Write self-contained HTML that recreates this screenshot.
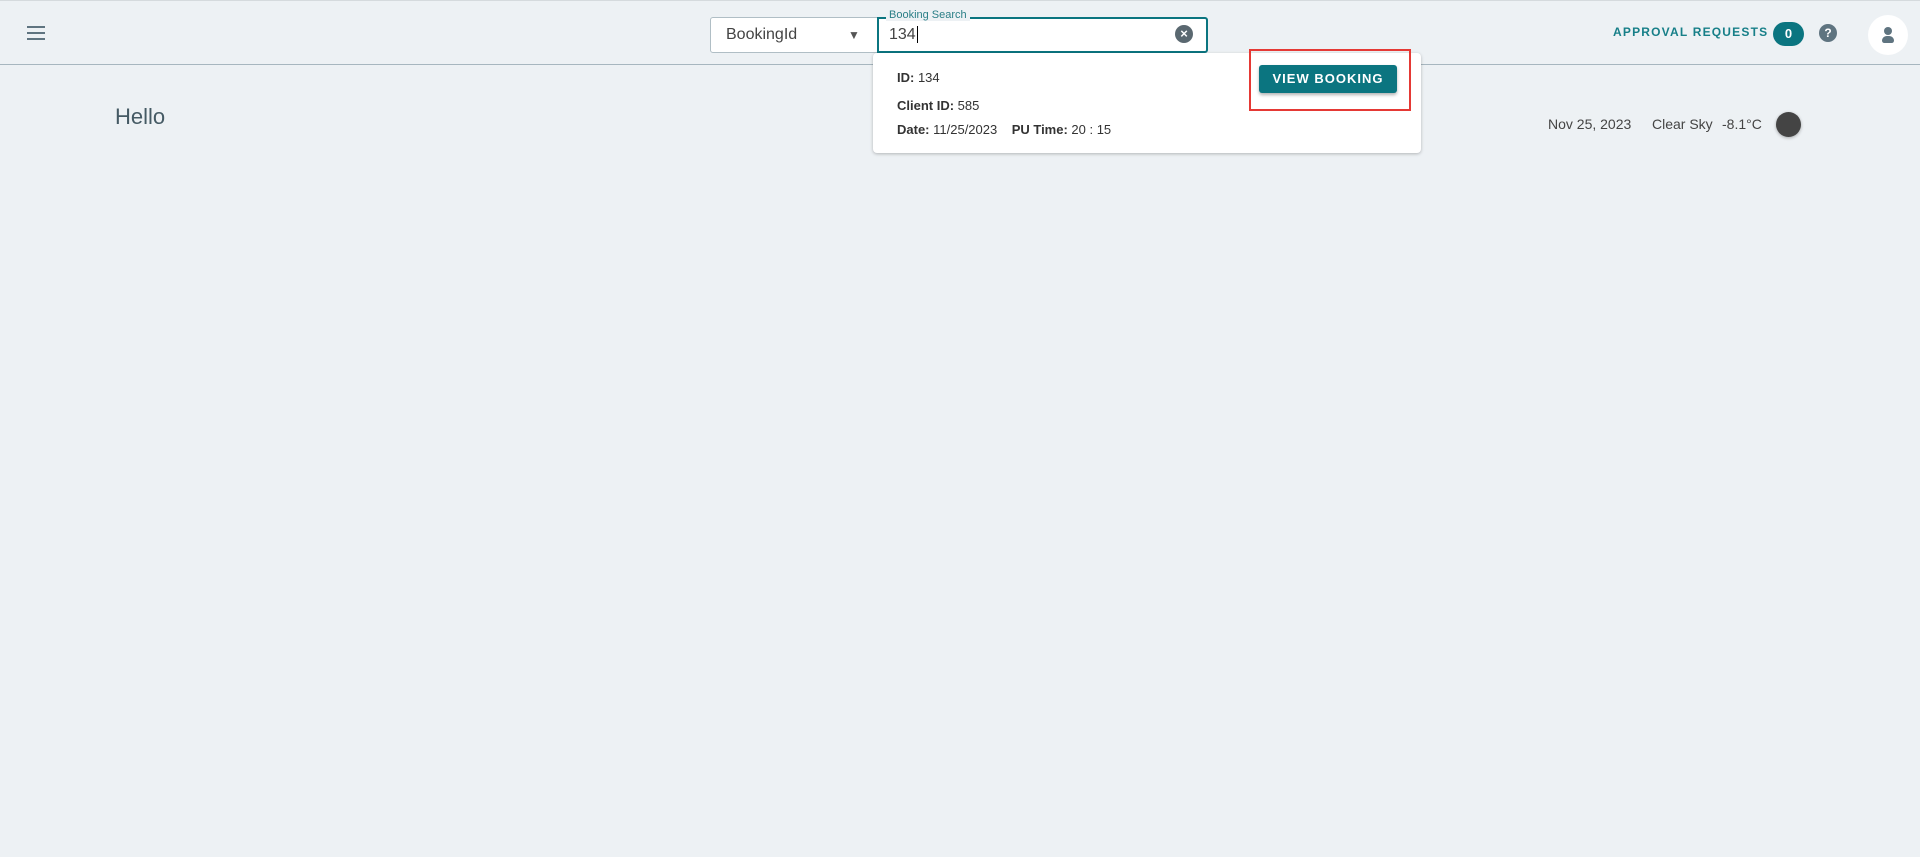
<!DOCTYPE html>
<html><head><style>
body{margin:0;width:1920px;height:857px;background:#edf1f4;font-family:"Liberation Sans",sans-serif;position:relative;overflow:hidden;color:#37474f}
.a{position:absolute;white-space:nowrap}
</style></head><body>
<div class="a" style="left:0;top:0;width:1920px;height:1px;background:#d5dadd"></div>
<div class="a" style="left:0;top:64px;width:1920px;height:1px;background:#a7b6bf"></div>
<div class="a" style="left:27px;top:26px;width:18px;height:2px;background:#5f7480;box-shadow:0 6px 0 #5f7480,0 12px 0 #5f7480"></div>
<div class="a" style="left:115px;top:104px;font-size:22px;font-weight:300;color:#455a64">Hello</div>

<div class="a" style="left:710px;top:17px;width:168px;height:36px;border:1px solid #b0bec5;border-radius:3px 0 0 3px;background:#fff;box-sizing:border-box"></div>
<div class="a" style="left:726px;top:26px;font-size:16px;color:#444">BookingId</div>
<div class="a" style="left:848px;top:28px;font-size:12px;color:#555">▼</div>
<div class="a" style="left:877px;top:17px;width:331px;height:36px;border:2px solid #0b7580;border-radius:0 3px 3px 0;box-sizing:border-box;background:#fff"></div>
<div class="a" style="left:886px;top:9px;font-size:11px;color:#2b7f87;background:#edf1f4;padding:0 3px">Booking Search</div>
<div class="a" style="left:889px;top:26px;font-size:16px;color:#444">134<span style="border-left:1px solid #000;margin-left:1px"></span></div>
<div class="a" style="left:1175px;top:25px;width:18px;height:18px;border-radius:50%;background:#5a6870;color:#fff;font-size:13px;line-height:18px;text-align:center;font-weight:bold">×</div>

<div class="a" style="left:873px;top:53px;width:548px;height:100px;background:#fff;border-radius:4px;box-shadow:0 1px 3px rgba(0,0,0,.25)"></div>
<div class="a" style="left:897px;top:70px;font-size:13px;color:#333"><b>ID:</b> 134</div>
<div class="a" style="left:897px;top:98px;font-size:13px;color:#333"><b>Client ID:</b> 585</div>
<div class="a" style="left:897px;top:122px;font-size:13px;color:#333"><b>Date:</b> 11/25/2023 &nbsp;&nbsp; <b>PU Time:</b> 20 : 15</div>
<div class="a" style="left:1259px;top:65px;width:138px;height:28px;background:#0b7580;border-radius:3px;color:#fff;font-size:13px;font-weight:bold;letter-spacing:1px;text-align:center;line-height:28px;box-shadow:0 2px 3px rgba(0,0,0,.3)">VIEW BOOKING</div>
<div class="a" style="left:1249px;top:49px;width:162px;height:62px;border:2px solid #e53935;box-sizing:border-box"></div>

<div class="a" style="left:1613px;top:25px;font-size:12px;font-weight:bold;letter-spacing:1.2px;color:#177f88">APPROVAL REQUESTS</div>
<div class="a" style="left:1773px;top:22px;width:31px;height:24px;border-radius:12px;background:#0b7580;color:#fff;font-size:13px;font-weight:bold;text-align:center;line-height:24px">0</div>
<div class="a" style="left:1819px;top:24px;width:18px;height:18px;border-radius:50%;background:#5f7480;color:#fff;font-size:12px;font-weight:bold;text-align:center;line-height:18px">?</div>
<div class="a" style="left:1868px;top:15px;width:40px;height:40px;border-radius:50%;background:#fff"></div>
<div class="a" style="left:1884px;top:27px;width:8px;height:8px;border-radius:50%;background:#5f7480"></div>
<div class="a" style="left:1882px;top:36px;width:12px;height:7px;border-radius:6px 6px 3px 3px;background:#5f7480"></div>

<div class="a" style="left:1548px;top:116px;font-size:14px;color:#444">Nov 25, 2023</div>
<div class="a" style="left:1652px;top:116px;font-size:14px;color:#444">Clear Sky</div>
<div class="a" style="left:1722px;top:116px;font-size:14px;color:#444">-8.1°C</div>
<div class="a" style="left:1776px;top:112px;width:25px;height:25px;border-radius:50%;background:#444;box-shadow:0 1px 3px rgba(0,0,0,.3)"></div>
</body></html>
